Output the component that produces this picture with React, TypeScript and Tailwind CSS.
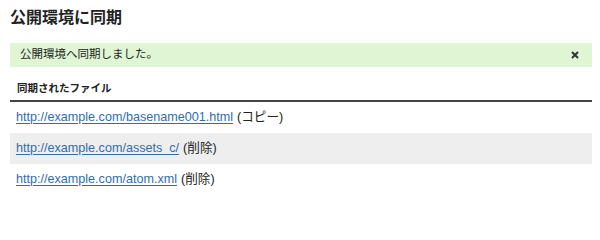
import React from 'react';

const files = [
  { url: 'http://example.com/basename001.html', action: 'コピー' },
  { url: 'http://example.com/assets_c/', action: '削除' },
  { url: 'http://example.com/atom.xml', action: '削除' },
];

const App = () => {
  return (
    <div className="w-[600px] h-[200px] bg-white px-[10px] pt-2 text-[#222] font-['Liberation_Sans','Noto_Sans_CJK_JP',sans-serif] overflow-hidden">
      <h1 className="text-[16px] leading-5 font-bold">公開環境に同期</h1>

      <div className="mt-[15px] h-6 w-[582px] flex items-center justify-between bg-[#dff5d4] pl-[10px] pr-[13px]">
        <p className="text-[11.5px]">公開環境へ同期しました。</p>
        <button aria-label="close">
          <svg width="8" height="8" viewBox="0 0 8 8">
            <path d="M1 1L7 7M7 1L1 7" stroke="#333" strokeWidth="2" />
          </svg>
        </button>
      </div>

      <div className="w-[582px]">
        <div className="mt-[13px] pl-[7px] pb-1 border-b-2 border-[#444] text-[10.5px] leading-4 font-bold">
          同期されたファイル
        </div>
        {files.map((file, i) => (
          <div
            key={file.url}
            className={`h-[31px] flex items-center pl-[6px] text-[12.6px] ${i % 2 === 1 ? 'bg-[#eeeeee]' : ''}`}
          >
            <a href="#" className="text-[#2f6db0] underline underline-offset-2">
              {file.url}
            </a>
            <span className="ml-1">({file.action})</span>
          </div>
        ))}
      </div>
    </div>
  );
};

export default App;
